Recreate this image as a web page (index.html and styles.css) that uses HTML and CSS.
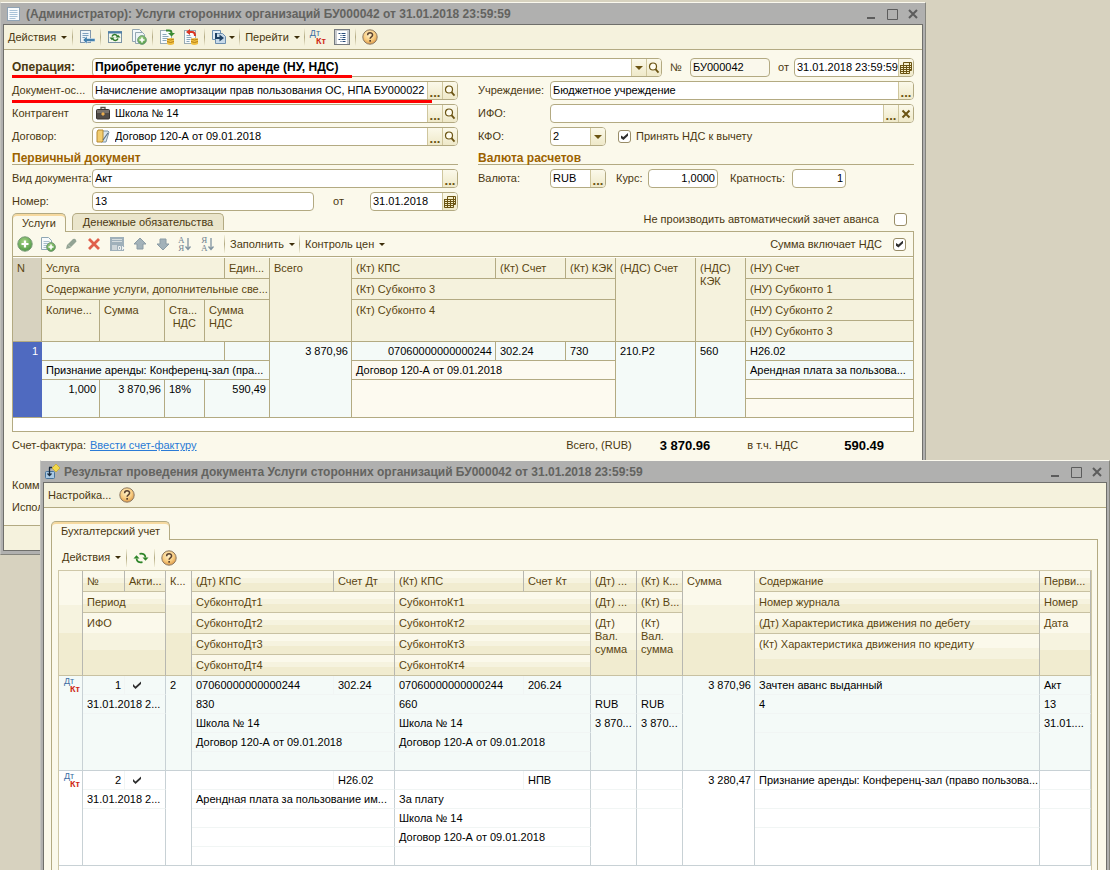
FILE: index.html
```html
<!DOCTYPE html>
<html lang="ru">
<head>
<meta charset="utf-8">
<title>Услуги сторонних организаций</title>
<link rel="stylesheet" href="styles.css">
</head>
<body>
<svg class="defs" width="0" height="0" aria-hidden="true">
  <defs>
    <radialGradient id="gold" cx="45%" cy="35%" r="65%"><stop offset="0" stop-color="#fff3cc"/><stop offset=".6" stop-color="#f8cc80"/><stop offset="1" stop-color="#dc9848"/></radialGradient>
    <radialGradient id="green" cx="45%" cy="35%" r="65%"><stop offset="0" stop-color="#a8d488"/><stop offset="1" stop-color="#4f9a45"/></radialGradient>
    <symbol id="help" viewBox="0 0 16 16"><circle cx="8" cy="8" r="7.2" fill="url(#gold)" stroke="#8d7a62"/><path d="M5.6 6.3c0-3.4 5-3.2 5-.3 0 1.900-2.500 1.700-2.500 3.700" fill="none" stroke="#5b4330" stroke-width="1.500"/><rect x="7.300" y="11" width="1.700" height="1.700" fill="#5b4330"/></symbol>
    <symbol id="mag" viewBox="0 0 12 12"><circle cx="5" cy="4.500" r="3.500" fill="#fffdf0" stroke="#6b5413" stroke-width="1.200"/><path d="M7.500 7.200l3 3.500" stroke="#6b5413" stroke-width="1.800"/></symbol>
    <symbol id="cal" viewBox="0 0 12 12"><path d="M3.500.5h8v8h-2v3h-9v-8h3z" fill="#f5eec8" stroke="#6b5413"/><path d="M0 3.500h11M1 5.500h10M1 7.500h10M1 9.500h8M3.500 3v8M6.500 3v8M9.500 1v8" fill="none" stroke="#6b5413" stroke-width="1"/></symbol>
    <symbol id="cross" viewBox="0 0 12 12"><path d="M2.500 2.500l7 7M9.500 2.500l-7 7" stroke="#6b5413" stroke-width="2"/></symbol>
    <symbol id="page" viewBox="0 0 16 16"><rect x="1.500" y="1.500" width="12" height="13" fill="#f8fbfd" stroke="#8fa3b5"/><path d="M3.500 4.500h8M3.500 6.500h8M3.500 8.500h8M3.500 10.500h8M3.500 12.500h6" stroke="#a9c3d8"/></symbol>
    <symbol id="write" viewBox="0 0 16 16"><rect x="1.500" y="1.500" width="10" height="12" fill="#eef4f8" stroke="#8198ae"/><path d="M3.500 4.500h6M3.500 6.500h6M3.500 8.500h3" stroke="#7fa0bf"/><path d="M4 11l4-4v2.500h8v3H8V15z" fill="#4380ae" stroke="#eff5f9" stroke-width=".5"/></symbol>
    <symbol id="reread" viewBox="0 0 16 16"><rect x="1.500" y="2.500" width="13" height="11" fill="#f4f8ec" stroke="#7b93a5"/><path d="M1 3.500h14" stroke="#4c7fa8" stroke-width="2"/><path d="M5 7.500c1-2.500 4-2.500 5-.5M11 9.500c-1 2.500-4 2.500-5 .5" fill="none" stroke="#2f7a2b" stroke-width="1.500"/><path d="M8.500 8.500h5L11 5.800zM7.500 8.500h-5L5 11.200z" fill="#2c7729"/></symbol>
    <symbol id="copyadd" viewBox="0 0 16 16"><path d="M1.500.5h7l3 3v9h-10z" fill="#f4f8fa" stroke="#93a6b2"/><path d="M4.500 3.500h7l2 2v9h-9z" fill="#eef4f6" stroke="#93a6b2"/><circle cx="11" cy="11" r="4.400" fill="url(#green)" stroke="#7ba482"/><path d="M11 8.500v5M8.500 11h5" stroke="#fff" stroke-width="1.600"/></symbol>
    <symbol id="lineadd" viewBox="0 0 16 16"><path d="M1.500 1.500h7l3 3v9h-10z" fill="#f7fafb" stroke="#8ea6b4"/><path d="M3.500 5.500h6M3.500 7.500h6M3.500 9.500h4M3.500 11.500h3" stroke="#a8bfcd"/><circle cx="11" cy="11" r="4.400" fill="url(#green)" stroke="#7a9b7a"/><path d="M11 8.500v5M8.500 11h5" stroke="#fff" stroke-width="1.600"/></symbol>
    <symbol id="post" viewBox="0 0 16 16"><rect x="1.500" y="1.500" width="11" height="13" fill="#f8fbfc" stroke="#9aabb3"/><path d="M3.500 5.500h4M3.500 7.500h6M3.500 9.500h5M3.500 11.500h4" stroke="#8aa6ba"/><path d="M7 1.500h3q2.500 0 2.500 2.500" fill="none" stroke="#3a8b32" stroke-width="2"/><path d="M9 4h7l-3.500 3.500z" fill="#3a8b32"/><path d="M8 10q4-2 7 0v5q-4 2-7 0z" fill="#f0bf42"/><path d="M8 10q3.500 2 7 0M8 12.500q3.500 2 7 0" fill="none" stroke="#b58016"/></symbol>
    <symbol id="unpost" viewBox="0 0 16 16"><rect x="1.500" y="1.500" width="11" height="13" fill="#f8fbfc" stroke="#9aabb3"/><path d="M3.500 6.500h4M3.500 8.500h5M3.500 10.500h4M3.500 12.500h3" stroke="#8aa6ba"/><path d="M6 3h3q3 0 3 4" fill="none" stroke="#da3522" stroke-width="2"/><path d="M7 0v6L3 3z" fill="#da3522"/><path d="M8 10q4-2 7 0v5q-4 2-7 0z" fill="#f0bf42"/><path d="M8 10q3.500 2 7 0M8 12.500q3.500 2 7 0" fill="none" stroke="#b58016"/></symbol>
    <symbol id="based" viewBox="0 0 16 16"><path d="M1.500 1.500h8v9h-8z" fill="#e3edf5" stroke="#6d8faf"/><path d="M4.500 4.500h7l3 3v7h-10z" fill="#c9dbea" stroke="#6d8faf"/><path d="M5 4v5h4" fill="none" stroke="#1f4265" stroke-width="2"/><path d="M8.500 5.500L13 9l-4.500 3.500z" fill="#1f4265"/></symbol>
    <symbol id="list" viewBox="0 0 16 16"><rect x=".5" y=".5" width="15" height="15" fill="#c9cccf" stroke="#767b80"/><rect x="3" y="2" width="10" height="13" fill="#fff"/><path d="M4.500 4.500h2M7.500 4.500h4M6.500 6.500h1M8.500 6.500h3M6.500 8.500h1M8.500 8.500h3M4.500 10.500h2M7.500 10.500h4M6.500 12.500h1M8.500 12.500h3" stroke="#274b78"/></symbol>
    <symbol id="add" viewBox="0 0 16 16"><circle cx="8" cy="8" r="7.200" fill="url(#green)" stroke="#7a9a78"/><path d="M8 4.500v7M4.500 8h7" stroke="#fff" stroke-width="2.200"/></symbol>
    <symbol id="pencil" viewBox="0 0 16 16"><path d="M3 13l1-4 6-6q2-1 3 1t0 2l-6 6z" fill="#92a394"/><path d="M5 8.500l2.500 2.500" stroke="#c1ccc0"/></symbol>
    <symbol id="delete" viewBox="0 0 16 16"><path d="M3 3l10 10M13 3L3 13" stroke="#e0604c" stroke-width="2.800"/></symbol>
    <symbol id="disk" viewBox="0 0 16 16"><path d="M1 1h14v14H1z" fill="#9fb0ba"/><path d="M3 3.500h10M3 5.500h10" stroke="#d5dcde"/><rect x="3" y="9" width="5" height="5" fill="#cdd5d8"/><path d="M9.500 10.500h2v3h-2zM13.500 10v4M16 10l-2 2 2 2" fill="none" stroke="#eef1f0"/></symbol>
    <symbol id="up" viewBox="0 0 16 16"><path d="M8 2l6 6h-3v5H5V8H2z" fill="#a3b2b9" stroke="#8b9ca5"/></symbol>
    <symbol id="down" viewBox="0 0 16 16"><path d="M8 14L2 8h3V3h6v5h3z" fill="#a3b2b9" stroke="#8b9ca5"/></symbol>
    <symbol id="arrow-long" viewBox="0 0 6 16"><path d="M3 2v11M.5 10.500L3 13.500l2.500-3" fill="none" stroke="#7f93a0" stroke-width="1.300"/></symbol>
    <symbol id="refresh" viewBox="0 0 16 16"><path d="M6.500 3.800q5.500-1 6 3.700M9.500 12.200q-5.500 1-6-3.700" fill="none" stroke="#2e8529" stroke-width="1.800"/><path d="M9.500 7.500h6l-3 3.200zM6.500 8.500h-6l3-3.200z" fill="#2e8529"/></symbol>
    <symbol id="case" viewBox="0 0 14 14"><path d="M5 4V1.500h4V4" fill="none" stroke="#565049" stroke-width="1.300"/><rect x=".5" y="3.500" width="13" height="9.500" rx="1" fill="#514c48" stroke="#38332f"/><path d="M1 4h12v3H1z" fill="#77716b"/><path d="M7 6l2 2-2 2-2-2z" fill="#ecae4e"/></symbol>
    <symbol id="folder" viewBox="0 0 14 14"><path d="M5 2h7l1 1-3 10H5z" fill="#d9e6ef" stroke="#7b93a3"/><path d="M1 3l1-2h5v11l-1 1H1z" fill="#f2cd70" stroke="#b68a32"/><path d="M7 11l5-7" stroke="#596f83" stroke-width="1.200"/></symbol>
    <symbol id="result" viewBox="0 0 16 16"><rect x="1.500" y="7.500" width="9" height="7" rx="1" fill="#a9c9e3" stroke="#47749b"/><path d="M5.500 3.500V11M3.500 9.500l2 2 2-2M5 3.500h3" fill="none" stroke="#182b3f" stroke-width="1.300"/><path d="M12 0l4 4-4 4-4-4z" fill="#f3d94b" stroke="#c5a527" stroke-width=".7"/></symbol>
    <symbol id="tick" viewBox="0 0 12 12"><path d="M2 5l2.500 2.500L10 2.500v2.500L4.500 10 2 7.500z" fill="#2f2f2f"/></symbol>
    <symbol id="min" viewBox="0 0 12 12"><path d="M2 10h8" stroke="#5c5c5c" stroke-width="2"/></symbol>
    <symbol id="max" viewBox="0 0 12 12"><path d="M1.500 1.500h10v10h-10z" fill="none" stroke="#5c5c5c"/></symbol>
    <symbol id="close" viewBox="0 0 12 12"><path d="M2 2l8 8M10 2l-8 8" stroke="#5c5c5c" stroke-width="2"/></symbol>
  </defs>
</svg>

<main class="desktop">
<section class="window window-doc">
  <header class="titlebar">
    <svg class="icon"><use href="#page"/></svg>
    <h1>(Администратор): Услуги сторонних организаций БУ000042 от 31.01.2018 23:59:59</h1>
    <div class="winbtns"><button aria-label="Свернуть"><svg><use href="#min"/></svg></button><button aria-label="Развернуть"><svg><use href="#max"/></svg></button><button aria-label="Закрыть"><svg><use href="#close"/></svg></button></div>
  </header>
  <div class="client">
    <nav class="toolbar">
      <button class="menu">Действия</button><i class="sep"></i>
      <button aria-label="Записать"><svg class="icon"><use href="#write"/></svg></button><i class="sep"></i>
      <button aria-label="Перечитать"><svg class="icon"><use href="#reread"/></svg></button>
      <button class="spaced" aria-label="Скопировать"><svg class="icon"><use href="#copyadd"/></svg></button><i class="sep"></i>
      <button aria-label="Провести"><svg class="icon"><use href="#post"/></svg></button>
      <button class="spaced" aria-label="Отмена проведения"><svg class="icon"><use href="#unpost"/></svg></button><i class="sep"></i>
      <button class="menu menu-icon" aria-label="Ввести на основании"><svg class="icon"><use href="#based"/></svg></button><i class="sep tight"></i>
      <button class="menu">Перейти</button><i class="sep tight"></i>
      <button class="dtkt" aria-label="Проводки"><b>Дт</b><b>Кт</b></button>
      <button class="spaced" aria-label="Список"><svg class="icon"><use href="#list"/></svg></button><i class="sep"></i>
      <button aria-label="Справка"><svg class="icon"><use href="#help"/></svg></button>
    </nav>

    <form class="form">
      <div class="line marked mark-op">
        <label class="lbl strong" for="op">Операция:</label>
        <div class="field grow"><select id="op" class="strong"><option>Приобретение услуг по аренде (НУ, НДС)</option></select><span class="fbtn drop"></span><button type="button" class="fbtn" aria-label="Открыть"><svg><use href="#mag"/></svg></button></div>
        <label class="numlbl" for="num">№</label>
        <div class="field w80 dim"><input id="num" value="БУ000042"></div>
        <label class="fromlbl" for="date">от</label>
        <div class="field w120"><input id="date" value="31.01.2018 23:59:59"><button type="button" class="fbtn" aria-label="Календарь"><svg><use href="#cal"/></svg></button></div>
      </div>
      <div class="cols">
        <div class="col">
          <div class="line marked mark-base"><label class="lbl" for="base">Документ-ос...</label><div class="field grow"><input id="base" value="Начисление амортизации прав пользования ОС, НПА БУ000022"><button type="button" class="fbtn dots" aria-label="Выбрать">...</button><button type="button" class="fbtn" aria-label="Открыть"><svg><use href="#mag"/></svg></button></div></div>
          <div class="line"><label class="lbl" for="partner">Контрагент</label><div class="field grow"><svg class="ficon"><use href="#case"/></svg><input id="partner" value="Школа № 14"><button type="button" class="fbtn dots" aria-label="Выбрать">...</button><button type="button" class="fbtn" aria-label="Открыть"><svg><use href="#mag"/></svg></button></div></div>
          <div class="line"><label class="lbl" for="contract">Договор:</label><div class="field grow"><svg class="ficon"><use href="#folder"/></svg><input id="contract" value="Договор 120-А от 09.01.2018"><button type="button" class="fbtn dots" aria-label="Выбрать">...</button><button type="button" class="fbtn" aria-label="Открыть"><svg><use href="#mag"/></svg></button></div></div>
          <h2>Первичный документ</h2>
          <div class="line"><label class="lbl" for="kind">Вид документа:</label><div class="field grow"><input id="kind" value="Акт"><button type="button" class="fbtn dots" aria-label="Выбрать">...</button></div></div>
          <div class="line"><label class="lbl" for="pnum">Номер:</label><div class="field grow"><input id="pnum" value="13"></div><label class="midlbl" for="pdate">от</label><div class="field w88"><input id="pdate" value="31.01.2018"><button type="button" class="fbtn" aria-label="Календарь"><svg><use href="#cal"/></svg></button></div></div>
        </div>
        <div class="col col-right">
          <div class="line"><label class="lbl" for="org">Учреждение:</label><div class="field grow"><input id="org" value="Бюджетное учреждение"><button type="button" class="fbtn dots" aria-label="Выбрать">...</button></div></div>
          <div class="line"><label class="lbl" for="ifo">ИФО:</label><div class="field grow"><input id="ifo" value=""><button type="button" class="fbtn dots" aria-label="Выбрать">...</button><button type="button" class="fbtn" aria-label="Очистить"><svg><use href="#cross"/></svg></button></div></div>
          <div class="line"><label class="lbl" for="kfo">КФО:</label><div class="field w56"><select id="kfo"><option>2</option></select><span class="fbtn drop"></span></div><label class="check lead"><input type="checkbox" checked>Принять НДС к вычету</label></div>
          <h2>Валюта расчетов</h2>
          <div class="line"><label class="lbl" for="cur">Валюта:</label><div class="field w56"><input id="cur" value="RUB"><button type="button" class="fbtn dots" aria-label="Выбрать">...</button></div><label class="ratelbl" for="rate">Курс:</label><div class="field w70"><input id="rate" class="num" value="1,0000"></div><label class="multlbl" for="mult">Кратность:</label><div class="field w54"><input id="mult" class="num" value="1"></div></div>
        </div>
      </div>

      <div class="tabs">
        <button type="button" class="tab active">Услуги</button><button type="button" class="tab">Денежные обязательства</button>
        <label class="check trail advance">Не производить автоматический зачет аванса<input type="checkbox"></label>
      </div>
      <div class="panel">
        <div class="toolbar itembar">
          <button type="button" aria-label="Добавить"><svg class="icon"><use href="#add"/></svg></button>
          <button type="button" aria-label="Скопировать"><svg class="icon"><use href="#lineadd"/></svg></button>
          <button type="button" aria-label="Изменить"><svg class="icon"><use href="#pencil"/></svg></button>
          <button type="button" aria-label="Удалить"><svg class="icon"><use href="#delete"/></svg></button>
          <button type="button" aria-label="Закончить"><svg class="icon"><use href="#disk"/></svg></button>
          <button type="button" aria-label="Вверх"><svg class="icon"><use href="#up"/></svg></button>
          <button type="button" aria-label="Вниз"><svg class="icon"><use href="#down"/></svg></button>
          <button type="button" class="sort" aria-label="По возрастанию"><span>А<br>Я</span><svg><use href="#arrow-long"/></svg></button>
          <button type="button" class="sort" aria-label="По убыванию"><span>Я<br>А</span><svg><use href="#arrow-long"/></svg></button>
          <i class="sep"></i>
          <button type="button" class="menu">Заполнить</button><i class="sep"></i>
          <button type="button" class="menu">Контроль цен</button>
          <label class="check trail">Сумма включает НДС<input type="checkbox" checked></label>
        </div>
        <table class="items">
          <colgroup><col class="c29"><col class="c58"><col class="c65"><col class="c40"><col class="c20"><col class="c45"><col class="c82"><col class="c144"><col class="c70"><col class="c50"><col class="c80"><col class="c50"><col></colgroup>
          <thead>
            <tr><th rowspan="4" class="rownum">N</th><th colspan="4">Услуга</th><th>Един...</th><th rowspan="4">Всего</th><th>(Кт) КПС</th><th>(Кт) Счет</th><th>(Кт) КЭК</th><th rowspan="4">(НДС) Счет</th><th rowspan="4">(НДС)<br>КЭК</th><th>(НУ) Счет</th></tr>
            <tr><th colspan="5">Содержание услуги, дополнительные све...</th><th colspan="3">(Кт) Субконто 3</th><th>(НУ) Субконто 1</th></tr>
            <tr><th rowspan="2">Количе...</th><th rowspan="2">Сумма</th><th rowspan="2" class="rate">Ста...<br>НДС</th><th rowspan="2" colspan="2">Сумма<br>НДС</th><th rowspan="2" colspan="3">(Кт) Субконто 4</th><th>(НУ) Субконто 2</th></tr>
            <tr><th>(НУ) Субконто 3</th></tr>
          </thead>
          <tbody>
            <tr><td rowspan="4" class="rownum num">1</td><td colspan="4"></td><td></td><td rowspan="4" class="num">3 870,96</td><td class="num">07060000000000244</td><td>302.24</td><td>730</td><td rowspan="4">210.P2</td><td rowspan="4">560</td><td>Н26.02</td></tr>
            <tr><td colspan="5">Признание аренды: Конференц-зал (пра...</td><td colspan="3" class="warm">Договор 120-А от 09.01.2018</td><td>Арендная плата за пользова...</td></tr>
            <tr><td rowspan="2" class="num">1,000</td><td rowspan="2" class="num">3 870,96</td><td rowspan="2">18%</td><td rowspan="2" colspan="2" class="num">590,49</td><td rowspan="2" colspan="3" class="warm"></td><td class="warm"></td></tr>
            <tr><td class="warm"></td></tr>
          </tbody>
        </table>
      </div>

      <div class="totals">
        <span>Счет-фактура:</span><a href="#">Ввести счет-фактуру</a>
        <span class="push">Всего, (RUB)</span><strong>3 870.96</strong><span class="vat">в т.ч. НДС</span><strong>590.49</strong>
      </div>
      <div class="notes"><label for="comment">Комментарий:</label><input id="comment"><label for="executor">Исполнитель:</label><input id="executor"></div>
    </form>
    <footer class="bottombar"></footer>
  </div>
</section>

<section class="window window-result">
  <header class="titlebar">
    <svg class="icon"><use href="#result"/></svg>
    <h1>Результат проведения документа Услуги сторонних организаций БУ000042 от 31.01.2018 23:59:59</h1>
    <div class="winbtns"><button aria-label="Свернуть"><svg><use href="#min"/></svg></button><button aria-label="Развернуть"><svg><use href="#max"/></svg></button><button aria-label="Закрыть"><svg><use href="#close"/></svg></button></div>
  </header>
  <div class="client">
    <nav class="toolbar"><button>Настройка...</button><button class="spaced" aria-label="Справка"><svg class="icon"><use href="#help"/></svg></button></nav>
    <div class="result">
      <div class="tabs"><button class="tab active">Бухгалтерский учет</button></div>
      <div class="panel">
        <div class="toolbar"><button class="menu">Действия</button><i class="sep"></i><button aria-label="Обновить"><svg class="icon"><use href="#refresh"/></svg></button><i class="sep"></i><button aria-label="Справка"><svg class="icon"><use href="#help"/></svg></button></div>
        <div class="sheet">
        <table class="entries">
          <colgroup><col class="c24"><col class="c42"><col class="c41"><col class="c26"><col class="c142"><col class="c61"><col class="c129"><col class="c67"><col class="c46"><col class="c46"><col class="c72"><col><col class="c51"></colgroup>
          <thead>
            <tr><th rowspan="5"></th><th>№</th><th>Акти...</th><th rowspan="5">К...</th><th>(Дт) КПС</th><th>Счет Дт</th><th>(Кт) КПС</th><th>Счет Кт</th><th>(Дт) ...</th><th>(Кт) К...</th><th rowspan="5">Сумма</th><th>Содержание</th><th>Перви...</th></tr>
            <tr><th colspan="2">Период</th><th colspan="2">СубконтоДт1</th><th colspan="2">СубконтоКт1</th><th>(Дт) ...</th><th>(Кт) В...</th><th>Номер журнала</th><th>Номер</th></tr>
            <tr><th colspan="2" rowspan="3">ИФО</th><th colspan="2">СубконтоДт2</th><th colspan="2">СубконтоКт2</th><th rowspan="3">(Дт)<br>Вал.<br>сумма</th><th rowspan="3">(Кт)<br>Вал.<br>сумма</th><th>(Дт) Характеристика движения по дебету</th><th rowspan="3">Дата</th></tr>
            <tr><th colspan="2">СубконтоДт3</th><th colspan="2">СубконтоКт3</th><th rowspan="2">(Кт) Характеристика движения по кредиту</th></tr>
            <tr><th colspan="2">СубконтоДт4</th><th colspan="2">СубконтоКт4</th></tr>
          </thead>
          <tbody class="tinted">
            <tr><td rowspan="5" class="mark end"><span class="dtkt"><b>Дт</b><b>Кт</b></span></td><td class="num soft">1</td><td><svg class="tick"><use href="#tick"/></svg></td><td rowspan="5" class="end">2</td><td class="soft">07060000000000244</td><td>302.24</td><td class="soft">07060000000000244</td><td>206.24</td><td></td><td></td><td rowspan="5" class="num end">3 870,96</td><td>Зачтен аванс выданный</td><td>Акт</td></tr>
            <tr><td colspan="2">31.01.2018 2...</td><td colspan="2">830</td><td colspan="2">660</td><td>RUB</td><td>RUB</td><td>4</td><td>13</td></tr>
            <tr><td colspan="2" rowspan="3" class="end"></td><td colspan="2">Школа № 14</td><td colspan="2">Школа № 14</td><td rowspan="3" class="end">3 870...</td><td rowspan="3" class="end">3 870...</td><td></td><td rowspan="3" class="end">31.01....</td></tr>
            <tr><td colspan="2">Договор 120-А от 09.01.2018</td><td colspan="2">Договор 120-А от 09.01.2018</td><td rowspan="2" class="end"></td></tr>
            <tr><td colspan="2" class="end"></td><td colspan="2" class="end"></td></tr>
          </tbody>
          <tbody>
            <tr><td rowspan="5" class="mark end"><span class="dtkt"><b>Дт</b><b>Кт</b></span></td><td class="num soft">2</td><td><svg class="tick"><use href="#tick"/></svg></td><td rowspan="5" class="end"></td><td class="soft"></td><td>Н26.02</td><td class="soft"></td><td>НПВ</td><td></td><td></td><td rowspan="5" class="num end">3 280,47</td><td>Признание аренды: Конференц-зал (право пользова...</td><td></td></tr>
            <tr><td colspan="2">31.01.2018 2...</td><td colspan="2">Арендная плата за пользование им...</td><td colspan="2">За плату</td><td></td><td></td><td></td><td></td></tr>
            <tr><td colspan="2" rowspan="3" class="end"></td><td colspan="2"></td><td colspan="2">Школа № 14</td><td rowspan="3" class="end"></td><td rowspan="3" class="end"></td><td></td><td rowspan="3" class="end"></td></tr>
            <tr><td colspan="2"></td><td colspan="2">Договор 120-А от 09.01.2018</td><td rowspan="2" class="end"></td></tr>
            <tr><td colspan="2" class="end"></td><td colspan="2" class="end"></td></tr>
          </tbody>
        </table>
        </div>
      </div>
    </div>
  </div>
</section>
</main>
</body>
</html>
```
FILE: styles.css
```css
* { box-sizing: border-box; }
body { margin: 0; background: #d7d2bf; color: #4a3810; font: 11px/13px "Liberation Sans", Arial, sans-serif; }
button, input, select { font: inherit; color: inherit; margin: 0; padding: 0; border: 0; background: none; border-radius: 0; }
button { display: flex; align-items: center; white-space: nowrap; }
svg { display: block; flex: none; }
.defs { position: absolute; }
.icon { width: 16px; height: 16px; }

.desktop { position: relative; height: 100vh; overflow: hidden; }
.window { position: absolute; background: #b0b0af; border: 1px solid #85857d; border-top-color: #fbf9ee; border-left-color: #c2c2bd; }
.window-doc { left: 0; top: 2px; right: 184px; padding: 0 2px 3px; }
.window-result { left: 40px; top: 460px; right: 0; bottom: -20px; padding: 0 2px; display: flex; flex-direction: column; }
.client { border: 1px solid #6f6f6b; background: #fbf9eb; min-height: 0; flex: 1; display: flex; flex-direction: column; }

.titlebar { display: flex; align-items: center; height: 21px; padding: 0 4px 0 3px; gap: 4px; }
.window-result .titlebar { padding-left: 1px; }
.titlebar h1 { flex: 1; margin: 0; padding-top: 1px; font-size: 12px; line-height: 14px; color: #63635f; white-space: nowrap; overflow: hidden; }
.winbtns { display: flex; gap: 9px; }
.winbtns svg { width: 12px; height: 12px; }

.toolbar { display: flex; align-items: center; height: 25px; padding: 0 4px; background: #f5f2dd; border-bottom: 1px solid #b3aa82; flex: none; }
.toolbar .spaced { margin-left: 8px; }
.sep { width: 1px; height: 18px; margin: 0 6px 0 5px; background: linear-gradient(#f5f2dd, #b3aa82, #f5f2dd); }
.sep.tight { margin: 0 5px 0 4px; }
.menu::after { content: ""; margin-left: 5px; border: 3px solid transparent; border-top-color: #3d2e0a; border-bottom-width: 0; }
.menu-icon::after { margin-left: 2px; }
.dtkt { display: block; width: 16px; height: 16px; text-align: left; font-size: 9px; line-height: 8px; }
.dtkt b { display: block; color: #3c6ea3; font-weight: normal; }
.dtkt b + b { text-align: right; color: #cf2714; font-weight: bold; }

.form { padding: 8px 8px 0; }
.line { display: flex; align-items: center; height: 19px; position: relative; }
.cols { display: flex; gap: 20px; padding-top: 4px; }
.col { flex: 446 1 0; min-width: 0; display: flex; flex-direction: column; gap: 4px; }
.col-right { flex-grow: 436; }
.lbl { width: 80px; flex: none; white-space: nowrap; }
.col-right .lbl { width: 72px; }
.strong { font-weight: bold; font-size: 12px; }
.marked::after { content: ""; position: absolute; left: 0; top: 17px; height: 3px; background: #f00; }
.mark-op::after { width: 340px; }
.mark-base::after { width: 420px; top: 19px; z-index: 1; }
.field { display: flex; height: 19px; border: 1px solid #b3aa82; border-radius: 4px; background: #fff; overflow: hidden; color: #000; flex: none; }
.field.grow { flex: 1 1 0; min-width: 0; }
.field input, .field select { flex: 1; min-width: 0; width: 0; padding: 0 0 0 2px; appearance: none; outline: 0; }
.field .num { padding-right: 2px; }
.field.dim { background: #faf8ec; }
.ficon { width: 14px; height: 14px; margin: 1px 3px 0 3px; }
.fbtn { width: 15px; flex: none; display: flex; justify-content: center; align-items: center; border-left: 1px solid #cfc69d; background: linear-gradient(#fbf9ea, #efe9c9); color: #6b5413; }
.fbtn svg { width: 12px; height: 12px; }
.dots { font-weight: bold; font-size: 13px; padding-top: 3px; }
.drop { margin-left: -15px; pointer-events: none; }
.field select { padding-right: 15px; }
.drop::after { content: ""; border: 4px solid transparent; border-top-color: #6b5413; border-bottom-width: 0; }
.num { text-align: right; }
.w54 { width: 54px; } .w56 { width: 56px; } .w70 { width: 70px; } .w80 { width: 80px; } .w88 { width: 88px; } .w120 { width: 120px; }
.numlbl { width: 28px; padding-left: 8px; }
.fromlbl { width: 24px; padding-left: 8px; }
.midlbl { width: 56px; padding-left: 19px; }
.ratelbl { width: 42px; padding-left: 10px; }
.multlbl { width: 74px; padding-left: 12px; white-space: nowrap; }
.check { display: flex; align-items: center; white-space: nowrap; }
.check input { appearance: none; width: 13px; height: 13px; flex: none; border: 1px solid #998d68; border-radius: 3px; background: #fff; }
.check input:checked::after { content: ""; display: block; width: 7px; height: 7px; margin: 2px; background: #2f2f2f; clip-path: polygon(0 35%, 35% 58%, 100% 0, 100% 38%, 35% 100%, 0 75%); }
.lead { margin-left: 12px; gap: 5px; }
.trail { margin-left: auto; gap: 11px; }
h2 { margin: 0; padding-top: 2px; height: 15px; border-bottom: 1px solid #b3aa82; color: #9c6200; font-size: 12px; line-height: 12px; }

.tabs { display: flex; align-items: flex-start; gap: 6px; height: 18px; margin-top: 2px; }
.tab { height: 17px; padding: 1px 9px 0; border: 1px solid #b3aa82; border-bottom: 0; border-radius: 5px 5px 0 0; background: #eae5cb; }
.tab + .tab { padding: 1px 10px 0; }
.tab.active { height: 19px; background: #fbf9eb; box-shadow: inset 0 2px #f6d99f; position: relative; z-index: 1; }
.advance { padding-right: 7px; height: 13px; gap: 15px; }
.panel { border: 1px solid #b3aa82; }
.panel .toolbar { background: none; }
.itembar button:not(.menu) { width: 16px; margin-right: 7px; }
.itembar .check { padding-right: 3px; }
.itembar .sep { margin: 0 5px 0 0; }
.itembar .menu + .sep { margin-left: 4px; }
.sort span { font: 9px/8px "Liberation Serif", serif; color: #718390; }
.sort svg { width: 6px; height: 16px; }

table { width: 100%; table-layout: fixed; border-collapse: separate; border-spacing: 0; }
th, td { padding: 3px 3px 0 4px; vertical-align: top; text-align: left; font-weight: normal; white-space: nowrap; overflow: hidden; border: 0 solid #b3aa82; border-width: 0 1px 1px 0; }
td { color: #000; }
th { color: #5a4510; }
td.num { text-align: right; }
thead tr { height: 21px; }
tbody tr { height: 19px; }
.c20 { width: 20px; } .c24 { width: 24px; } .c26 { width: 26px; } .c29 { width: 29px; } .c40 { width: 40px; } .c41 { width: 41px; } .c42 { width: 42px; } .c45 { width: 45px; } .c46 { width: 46px; } .c50 { width: 50px; } .c51 { width: 51px; } .c58 { width: 58px; } .c61 { width: 61px; } .c65 { width: 65px; } .c67 { width: 67px; } .c70 { width: 70px; } .c72 { width: 72px; } .c80 { width: 80px; } .c82 { width: 82px; } .c129 { width: 129px; } .c142 { width: 142px; } .c144 { width: 144px; }
.form .panel { background: #fff; }
.form .panel .toolbar { background: #fbf9eb; }
.items { margin-bottom: 13px; border-top: 1px solid #fffef8; }
.items th { background: #f5f2dd; padding-top: 4px; }
.items td { background: #f4faf8; }
.items td.warm { background: #fdfaf0; }
.items tr > :last-child { border-right: 0; }
.items th.rownum { background: #d7d2bf; }
.items td.rownum { background: #4f6ac0; color: #fff; border-right-color: #4f6ac0; }
.items .rate { text-align: right; padding-right: 8px; }

.totals { display: flex; align-items: center; padding: 5px 30px 0 0; height: 22px; }
.totals a { margin-left: 4px; color: #2a7bd6; }
.totals strong { color: #000; font-size: 13px; }
.push { margin-left: auto; margin-right: 28px; }
.vat { margin: 0 46px 0 37px; }
.notes { display: grid; grid-template-columns: 80px 1fr; row-gap: 9px; padding: 25px 0 11px; }

.bottombar { height: 25px; background: #f5f2dd; border-top: 1px solid #b3aa82; }

.result { padding: 11px 8px 0 7px; flex: 1; display: flex; flex-direction: column; min-height: 0; }
.result .panel { flex: 1; padding: 5px 5px 0 6px; display: flex; flex-direction: column; min-height: 0; }
.result .panel .toolbar { border: 0; }
.sheet { flex: 1; border: 1px solid #cfc8a8; border-bottom: 0; background: #fff; }
.entries th { background: linear-gradient(#fbf9eb 0 33%, #f6f3df 33% 60%, #f1ecd0 60%); border-color: #c8c1a2; border-right-color: #b7b7b0; padding-top: 4px; }
.entries td { border-color: #f1f5f4; border-right-color: #c8d1d5; }
.entries .soft { border-right-color: #f1f5f4; }
.entries .end { border-bottom-color: #c8d1d5; }
.entries th:nth-last-child(1), .entries td:last-child { padding-right: 0; }
.tinted { background: #f4faf8; }
.entries .mark { padding: 1px 2px 0 5px; }
.tick { width: 12px; height: 12px; margin-left: 2px; }
```
